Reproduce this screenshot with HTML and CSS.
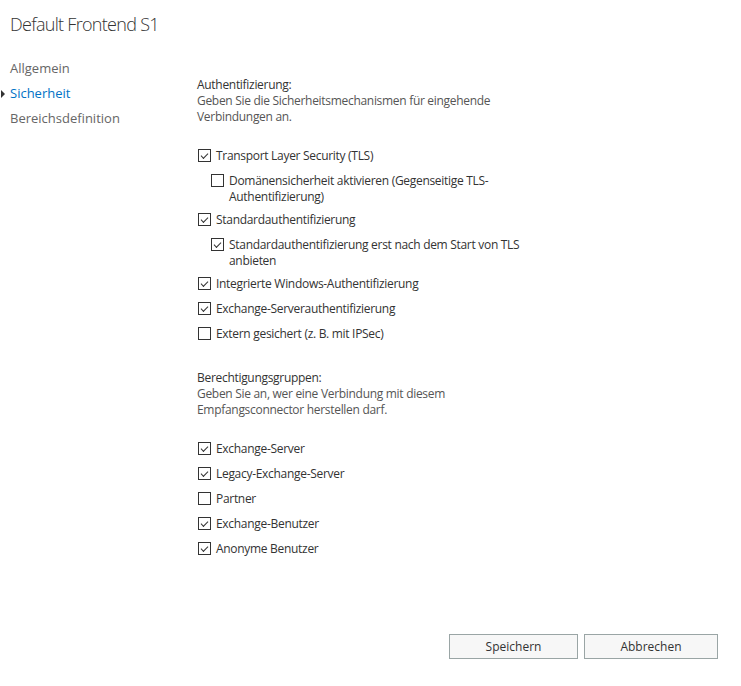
FILE: index.html
```html
<!DOCTYPE html>
<html lang="de">
<head>
    <meta charset="UTF-8">
    <title>Default Frontend S1</title>
    <link rel="stylesheet" href="styles.css">
</head>
<body>
    <div id="dialog">
        <h1 class="title">Default Frontend S1</h1>

        <div class="body">
            <ul class="nav">
                <li>Allgemein</li>
                <li class="active">Sicherheit</li>
                <li>Bereichsdefinition</li>
            </ul>

            <div class="content">
                <div class="section">
                    <p class="label">Authentifizierung:</p>
                    <p class="hint">Geben Sie die Sicherheitsmechanismen für eingehende<br>Verbindungen an.</p>
                </div>

                <div class="checks">
                    <label class="check on"><span class="box"></span><span>Transport Layer Security (TLS)</span></label>
                    <label class="check sub"><span class="box"></span><span>Domänensicherheit aktivieren (Gegenseitige TLS-<br>Authentifizierung)</span></label>
                    <label class="check on"><span class="box"></span><span>Standardauthentifizierung</span></label>
                    <label class="check sub on"><span class="box"></span><span>Standardauthentifizierung erst nach dem Start von TLS<br>anbieten</span></label>
                    <label class="check on"><span class="box"></span><span>Integrierte Windows-Authentifizierung</span></label>
                    <label class="check on"><span class="box"></span><span>Exchange-Serverauthentifizierung</span></label>
                    <label class="check"><span class="box"></span><span>Extern gesichert (z. B. mit IPSec)</span></label>
                </div>

                <div class="section">
                    <p class="label">Berechtigungsgruppen:</p>
                    <p class="hint">Geben Sie an, wer eine Verbindung mit diesem<br>Empfangsconnector herstellen darf.</p>
                </div>

                <div class="checks">
                    <label class="check on"><span class="box"></span><span>Exchange-Server</span></label>
                    <label class="check on"><span class="box"></span><span>Legacy-Exchange-Server</span></label>
                    <label class="check"><span class="box"></span><span>Partner</span></label>
                    <label class="check on"><span class="box"></span><span>Exchange-Benutzer</span></label>
                    <label class="check on"><span class="box"></span><span>Anonyme Benutzer</span></label>
                </div>
            </div>
        </div>

        <div class="buttons">
            <button>Speichern</button>
            <button class="wide">Abbrechen</button>
        </div>
    </div>
</body>
</html>
```

FILE: styles.css
```css
body {
    margin: 0;
    padding: 0;
    background: #fff;
    font-family: 'Open Sans', sans-serif;
    color: #333;
}

#dialog {
    width: 741px;
    height: 686px;
    display: flex;
    flex-direction: column;
}

.title {
    margin: 0;
    padding: 12px 0 0 10px;
    height: 36px;
    font-size: 18px;
    font-weight: 300;
    letter-spacing: -0.7px;
    color: #333;
}

.body {
    display: flex;
    flex: 1;
}

.nav {
    list-style: none;
    margin: 0;
    padding: 8px 0 0 10px;
    width: 187px;
}

.nav li {
    font-size: 13px;
    line-height: 25px;
    color: #666;
    position: relative;
}

.nav li.active {
    color: #0072c6;
}

.nav li.active::before {
    content: '';
    position: absolute;
    left: -9px;
    top: 9px;
    border-left: 4px solid #333;
    border-top: 4px solid transparent;
    border-bottom: 4px solid transparent;
}

.content {
    padding-top: 29px;
    font-size: 12px;
    line-height: 16px;
    letter-spacing: -0.3px;
}

.section p {
    margin: 0;
}

.label {
    color: #333;
}

.hint {
    color: #555;
}

.checks {
    display: flex;
    flex-direction: column;
    gap: 7px;
    padding: 23px 0 26px;
}

.check {
    display: flex;
    align-items: flex-start;
    min-height: 18px;
    color: #333;
}

.check.sub {
    padding-left: 13px;
}

.box {
    width: 11px;
    height: 11px;
    border: 1px solid #333;
    margin: 1px 5px 0 1px;
    flex: none;
    position: relative;
}

.check.on .box::after {
    content: '';
    position: absolute;
    left: 2px;
    top: 1px;
    width: 6px;
    height: 3px;
    border-left: 1px solid #333;
    border-bottom: 1px solid #333;
    transform: translate(0, 2px) rotate(-45deg);
    transform-origin: center;
}

.buttons {
    display: flex;
    justify-content: flex-end;
    gap: 6px;
    padding: 0 23px 27px 0;
}

.buttons button {
    width: 129px;
    height: 25px;
    border: 1px solid #9aa5a5;
    background: #f7f7f7;
    font-family: 'Open Sans', sans-serif;
    font-size: 12px;
    color: #333;
}

.buttons button.wide {
    width: 134px;
}
```
